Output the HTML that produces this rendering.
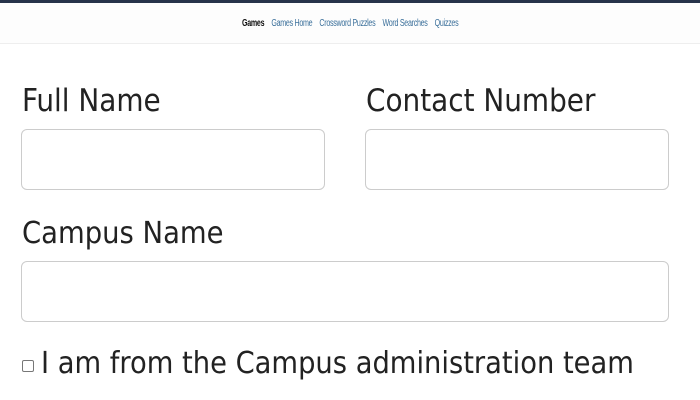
<!DOCTYPE html>
<html><head><meta charset="utf-8"><style>
html,body{margin:0;padding:0;width:700px;height:400px;overflow:hidden;background:#fff;font-family:"DejaVu Sans Condensed","Liberation Sans",sans-serif;color:#222;}
.top{position:absolute;left:0;top:0;width:700px;height:3px;background:#27334a;}
.hdr{position:absolute;left:0;top:3px;width:700px;height:40px;border-bottom:1px solid #eee;background:#fdfdfd;}
.nav{position:absolute;top:15px;left:242px;font-family:"Liberation Sans",sans-serif;font-size:10px;letter-spacing:-0.4px;white-space:nowrap;transform:scaleX(0.71);transform-origin:0 0;}
.nav span{margin-right:10px;color:#3a6f9a;}
.nav span.b{color:#111;font-weight:bold;}
.lbl{position:absolute;font-size:31px;color:#222;white-space:nowrap;}
.box{position:absolute;border:1px solid #ccc;border-radius:6px;background:#fff;}
.cb{position:absolute;left:22px;top:360px;width:10px;height:10px;border:1px solid #777;border-radius:2px;}
</style></head><body>
<div class="top"></div>
<div class="hdr"><div class="nav"><span class="b">Games</span><span>Games Home</span><span>Crossword Puzzles</span><span>Word Searches</span><span>Quizzes</span></div></div>
<div class="lbl" style="left:22px;top:83px">Full Name</div>
<div class="lbl" style="left:366px;top:83px">Contact Number</div>
<div class="box" style="left:21px;top:129px;width:302px;height:59px"></div>
<div class="box" style="left:365px;top:129px;width:302px;height:59px"></div>
<div class="lbl" style="left:22px;top:216px;font-size:30.5px">Campus Name</div>
<div class="box" style="left:21px;top:261px;width:646px;height:59px"></div>
<div class="cb"></div>
<div class="lbl" style="left:41px;top:346px;font-size:30.4px">I am from the Campus administration team</div>
</body></html>
